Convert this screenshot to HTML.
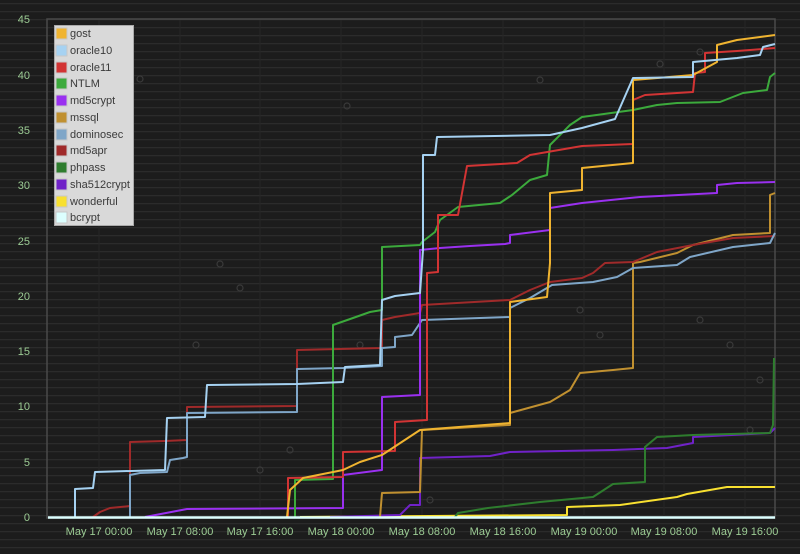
<!DOCTYPE html>
<html><head><meta charset="utf-8"><style>
html,body{margin:0;padding:0;background:#1b1b1b;}
svg{display:block;}
text{font-family:"Liberation Sans",sans-serif;}
</style></head><body>
<svg width="800" height="554" viewBox="0 0 800 554" xmlns="http://www.w3.org/2000/svg">
<defs>
<pattern id="hl" width="800" height="8" patternUnits="userSpaceOnUse">
<rect width="800" height="8" fill="#1c1c1c"/>
<rect y="3" width="800" height="1.3" fill="#2b2b2b"/>
</pattern>
</defs>
<rect width="800" height="554" fill="url(#hl)"/>
<g stroke="#262626" stroke-width="1">
<line x1="99" y1="19" x2="99" y2="517"/><line x1="180" y1="19" x2="180" y2="517"/><line x1="260" y1="19" x2="260" y2="517"/><line x1="341" y1="19" x2="341" y2="517"/><line x1="422" y1="19" x2="422" y2="517"/><line x1="503" y1="19" x2="503" y2="517"/><line x1="584" y1="19" x2="584" y2="517"/><line x1="664" y1="19" x2="664" y2="517"/><line x1="745" y1="19" x2="745" y2="517"/>
</g>
<g fill="none" stroke="#3a3a3a" stroke-width="1.2">
<circle cx="140" cy="79" r="3"/><circle cx="122" cy="104" r="3"/><circle cx="347" cy="106" r="3"/><circle cx="220" cy="264" r="3"/><circle cx="240" cy="288" r="3"/><circle cx="196" cy="345" r="3"/><circle cx="360" cy="345" r="3"/><circle cx="580" cy="310" r="3"/><circle cx="600" cy="335" r="3"/><circle cx="700" cy="320" r="3"/><circle cx="730" cy="345" r="3"/><circle cx="760" cy="380" r="3"/><circle cx="750" cy="430" r="3"/><circle cx="260" cy="470" r="3"/><circle cx="290" cy="450" r="3"/><circle cx="700" cy="52" r="3"/><circle cx="660" cy="64" r="3"/><circle cx="540" cy="80" r="3"/><circle cx="430" cy="500" r="3"/>
</g>
<path d="M47 19 H775 V518 H47 Z" fill="none" stroke="#4a4a4a" stroke-width="1.5"/>
<g font-size="11" fill="#9ccc94" text-anchor="end">
<text x="30" y="23">45</text><text x="30" y="79">40</text><text x="30" y="134">35</text><text x="30" y="189">30</text><text x="30" y="245">25</text><text x="30" y="300">20</text><text x="30" y="355">15</text><text x="30" y="410">10</text><text x="30" y="466">5</text><text x="30" y="521">0</text>
</g>
<g font-size="11" fill="#9ccc94" text-anchor="middle">
<text x="99" y="535">May 17 00:00</text><text x="180" y="535">May 17 08:00</text><text x="260" y="535">May 17 16:00</text><text x="341" y="535">May 18 00:00</text><text x="422" y="535">May 18 08:00</text><text x="503" y="535">May 18 16:00</text><text x="584" y="535">May 19 00:00</text><text x="664" y="535">May 19 08:00</text><text x="745" y="535">May 19 16:00</text>
</g>
<g fill="none" stroke-width="2" stroke-linejoin="round">
<polyline stroke="#f8e030" points="300,517 567,515 567,507 620,505 677,497 687,494 727,487 775,487"/>
<polyline stroke="#7022c8" points="330,517 400,515 410,505 420,505 420,458 490,456 510,452 613,450 667,448 693,443 693,437 770,433 775,428"/>
<polyline stroke="#2e7d2e" points="455,517 458,513 488,508 540,502 593,497 613,484 645,482 645,447 657,437 693,435 770,433 773,425 774,358"/>
<polyline stroke="#c09030" points="380,517 382,493 420,492 422,430 510,425 510,413 550,402 570,390 580,373 613,370 633,368 633,263 640,262 677,253 693,245 733,235 770,233 770,195 775,193"/>
<polyline stroke="#a02a2a" points="93,517 100,512 110,508 130,506 130,442 165,441 187,440 187,407 297,406 297,350 382,348 382,320 395,317 420,313 422,305 510,300 530,290 550,282 582,278 593,273 605,263 633,262 657,252 693,245 733,238 775,236"/>
<polyline stroke="#7fa6c8" points="130,517 130,475 140,473 167,472 170,460 183,458 187,457 187,413 297,412 297,369 343,368 382,366 382,348 395,347 395,337 412,335 422,320 510,317 510,308 530,298 552,285 593,282 617,277 633,268 677,265 690,257 733,247 770,243 775,233"/>
<polyline stroke="#9a30f0" points="145,517 187,509 343,508 343,475 382,470 382,397 420,395 420,250 440,248 470,246 505,244 510,243 510,235 550,230 550,208 582,203 640,197 717,193 717,185 737,183 775,182"/>
<polyline stroke="#3caa3c" points="295,517 295,480 333,479 333,325 353,318 370,312 382,310 382,247 420,245 422,242 435,232 440,220 458,207 500,203 512,195 530,180 547,175 550,145 570,125 582,117 633,110 657,105 677,103 720,102 743,93 767,90 770,77 775,73"/>
<polyline stroke="#d23434" points="288,517 288,478 343,477 343,452 395,451 395,422 427,420 427,273 438,272 438,215 458,215 467,166 517,163 530,155 582,146 633,144 633,100 645,95 693,92 695,73 705,72 705,53 737,51 775,48"/>
<polyline stroke="#f0b430" points="287,517 290,490 303,478 343,470 360,462 382,455 420,430 510,423 510,302 547,297 550,263 550,193 582,190 582,168 633,163 633,80 693,75 717,62 717,45 737,40 775,35"/>
<polyline stroke="#a6d2f2" points="75,517 75,489 93,488 95,472 165,470 167,418 205,417 207,385 297,384 343,382 345,367 380,365 382,300 395,296 420,293 423,250 423,155 435,155 437,137 550,135 582,128 615,119 633,78 693,77 693,62 737,58 760,55 763,47 775,44"/>
<line x1="48" y1="517.5" x2="775" y2="517.5" stroke="#dcffff" stroke-width="2.5"/>
</g>
<rect x="54.5" y="25.5" width="79" height="200" fill="#d9d9d9" stroke="#aaaaaa"/>
<g font-size="11" fill="#3a3a3a">
<rect x="56" y="28" width="11" height="11" fill="#f0b430" stroke="#c8c8c8"/><text x="70" y="37">gost</text>
<rect x="56" y="45" width="11" height="11" fill="#a6d2f2" stroke="#c8c8c8"/><text x="70" y="54">oracle10</text>
<rect x="56" y="62" width="11" height="11" fill="#d23434" stroke="#c8c8c8"/><text x="70" y="71">oracle11</text>
<rect x="56" y="78" width="11" height="11" fill="#3caa3c" stroke="#c8c8c8"/><text x="70" y="87">NTLM</text>
<rect x="56" y="95" width="11" height="11" fill="#9a30f0" stroke="#c8c8c8"/><text x="70" y="104">md5crypt</text>
<rect x="56" y="112" width="11" height="11" fill="#c09030" stroke="#c8c8c8"/><text x="70" y="121">mssql</text>
<rect x="56" y="129" width="11" height="11" fill="#7fa6c8" stroke="#c8c8c8"/><text x="70" y="138">dominosec</text>
<rect x="56" y="145" width="11" height="11" fill="#a02a2a" stroke="#c8c8c8"/><text x="70" y="154">md5apr</text>
<rect x="56" y="162" width="11" height="11" fill="#2e7d2e" stroke="#c8c8c8"/><text x="70" y="171">phpass</text>
<rect x="56" y="179" width="11" height="11" fill="#7022c8" stroke="#c8c8c8"/><text x="70" y="188">sha512crypt</text>
<rect x="56" y="196" width="11" height="11" fill="#f8e030" stroke="#c8c8c8"/><text x="70" y="205">wonderful</text>
<rect x="56" y="212" width="11" height="11" fill="#dcffff" stroke="#c8c8c8"/><text x="70" y="221">bcrypt</text>
</g>
</svg>
</body></html>
